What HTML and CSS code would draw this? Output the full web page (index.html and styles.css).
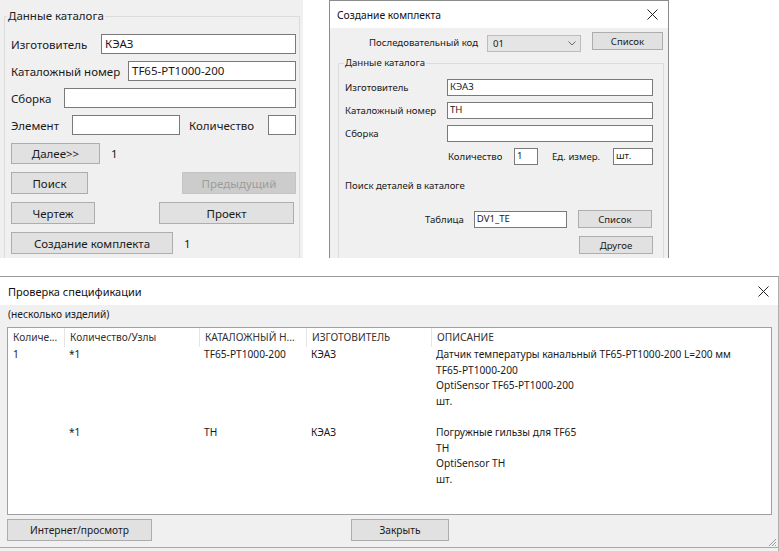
FILE: index.html
```html
<!DOCTYPE html>
<html lang="ru">
<head>
<meta charset="utf-8">
<title>Каталог</title>
<link rel="stylesheet" href="styles.css">
</head>
<body>
<div class="top">
  <section class="p1">
    <fieldset class="grp1">
      <legend>Данные каталога</legend>
      <div class="fields1">
        <div class="row1"><span>Изготовитель</span><div class="tb w195">КЭАЗ</div></div>
        <div class="row1"><span>Каталожный номер</span><div class="tb w168">TF65-PT1000-200</div></div>
        <div class="row1"><span>Сборка</span><div class="tb w232"></div></div>
        <div class="row1"><span class="lbl-el">Элемент</span><div class="tb w108"></div><span class="ml-qty">Количество</span><div class="tb w28 push"></div></div>
      </div>
      <div class="btns1">
        <div class="brow"><div class="btn w89 h21">Далее&gt;&gt;</div><span class="cnt">1</span></div>
        <div class="brow between"><div class="btn w77">Поиск</div><div class="btn w114 dis">Предыдущий</div></div>
        <div class="brow between"><div class="btn w84">Чертеж</div><div class="btn w135 mr3">Проект</div></div>
        <div class="brow"><div class="btn w162">Создание комплекта</div><span class="cnt">1</span></div>
      </div>
    </fieldset>
  </section>

  <section class="p2">
    <header class="tbar2"><span>Создание комплекта</span>
      <svg class="xicon" width="11" height="11" viewBox="0 0 11 11"><path d="M0.5 0.5 L10.5 10.5 M10.5 0.5 L0.5 10.5" stroke="#222" stroke-width="1" fill="none"/></svg>
    </header>
    <div class="body2">
      <div class="coderow">
        <span class="codelbl">Последовательный код</span>
        <div class="combo"><span>01</span>
          <svg width="8" height="5" viewBox="0 0 8 5"><path d="M0.5 0.5 L4 4 L7.5 0.5" stroke="#666" fill="none"/></svg>
        </div>
        <div class="btn b2 w71">Список</div>
      </div>
      <fieldset class="grp2">
        <legend>Данные каталога</legend>
        <div class="fields2">
          <div class="row2"><span>Изготовитель</span><div class="tb t2 w206">КЭАЗ</div></div>
          <div class="row2"><span>Каталожный номер</span><div class="tb t2 w206">TH</div></div>
          <div class="row2"><span>Сборка</span><div class="tb t2 w206"></div></div>
          <div class="row2 qtyrow"><span class="lbl-q">Количество</span><div class="tb t2 w24">1</div><span class="lbl-u">Ед. измер.</span><div class="tb t2 w40">шт.</div></div>
        </div>
        <div class="search">Поиск деталей в каталоге</div>
        <div class="tablerow"><span>Таблица</span><div class="tb t2 w93 ml10">DV1_TE</div><div class="btn b2 w74 ml11">Список</div></div>
        <div class="otherrow"><div class="btn b2 w74">Другое</div></div>
      </fieldset>
    </div>
  </section>
</div>

<section class="p3">
  <header class="tbar3"><span>Проверка спецификации</span>
    <svg class="xicon3" width="11" height="11" viewBox="0 0 11 11"><path d="M0.5 0.5 L10.5 10.5 M10.5 0.5 L0.5 10.5" stroke="#222" stroke-width="1" fill="none"/></svg>
  </header>
  <div class="body3">
    <div class="sub">(несколько изделий)</div>
    <div class="list">
      <div class="lhead">
        <div class="c">Количе...</div><div class="c">Количество/Узлы</div><div class="c">КАТАЛОЖНЫЙ Н...</div><div class="c">ИЗГОТОВИТЕЛЬ</div><div class="c">ОПИСАНИЕ</div>
      </div>
      <div class="lrow">
        <div class="c">1</div><div class="c">*1</div><div class="c">TF65-PT1000-200</div><div class="c">КЭАЗ</div>
        <div class="c desc"><div>Датчик температуры канальный TF65-PT1000-200 L=200 мм</div><div>TF65-PT1000-200</div><div>OptiSensor TF65-PT1000-200</div><div>шт.</div></div>
      </div>
      <div class="lrow">
        <div class="c"></div><div class="c">*1</div><div class="c">TH</div><div class="c">КЭАЗ</div>
        <div class="c desc"><div>Погружные гильзы для TF65</div><div>TH</div><div>OptiSensor TH</div><div>шт.</div></div>
      </div>
    </div>
    <div class="foot">
      <div class="btn b3 w145">Интернет/просмотр</div>
      <div class="btn b3 w98 ml199">Закрыть</div>
    </div>
  </div>
  <svg class="grip" width="10" height="10" viewBox="0 0 10 10"><path d="M9 2 L2 9 M9 5 L5 9 M9 8 L8 9" stroke="#9a9a9a" fill="none"/></svg>
</section>
</body>
</html>
```

FILE: styles.css
```css
* { box-sizing: border-box; }
body {
  margin: 0;
  width: 779px;
  height: 551px;
  overflow: hidden;
  background: #fff;
  font-family: "Noto Sans", "DejaVu Sans", sans-serif;
  color: #1a1a1a;
}

.top { display: flex; height: 258px; margin-bottom: 18px; }

/* ---------- panel 1 ---------- */
.p1 {
  width: 303px;
  height: 258px;
  background: #f0f0f0;
  overflow: hidden;
  padding: 8px 0 0 4px;
  font-size: 11.5px;
}
.grp1 {
  margin: 0;
  width: 296px;
  height: 280px;
  border: 1px solid #dcdcdc;
  padding: 0 3px 0 6px;
}
.grp1 legend { padding: 0 1px; margin-left: -4px; line-height: 16px; color: #222; }
.fields1 { display: flex; flex-direction: column; gap: 7px; padding-top: 10px; }
.row1 { display: flex; align-items: center; justify-content: space-between; height: 20px; white-space: nowrap; }
.row1 .lbl-el { width: 61px; flex: none; }
.row1 .ml-qty { margin-left: 9px; }
.row1 .push { margin-left: auto; }
.tb {
  height: 20px;
  background: #fff;
  border: 1px solid #7a7a7a;
  padding: 0 3px;
  line-height: 17px;
  white-space: nowrap;
  overflow: hidden;
}
.w195 { width: 195px; } .w168 { width: 168px; } .w232 { width: 232px; }
.w108 { width: 108px; } .w28 { width: 28px; }

.btns1 { display: flex; flex-direction: column; gap: 8px; margin-top: 7px; }
.brow { display: flex; align-items: center; height: 22px; }
.brow.between { justify-content: space-between; }
.btn {
  height: 22px;
  background: #e1e1e1;
  border: 1px solid #adadad;
  display: flex;
  align-items: center;
  justify-content: center;
  white-space: nowrap;
}
.btn.dis { background: #cccccc; border-color: #c4c4c4; color: #9c9c9c; }
.h21 { height: 21px; }
.w89 { width: 89px; } .w77 { width: 77px; } .w114 { width: 114px; }
.w84 { width: 84px; } .w135 { width: 135px; } .w162 { width: 162px; }
.mr3 { margin-right: 2px; }
.cnt { margin-left: 11px; }

/* ---------- panel 2 ---------- */
.p2 {
  margin-left: 26px;
  width: 340px;
  height: 258px;
  border: 1px solid #8c8c8c;
  border-bottom: none;
  background: #f0f0f0;
  overflow: hidden;
  font-size: 9.6px;
  white-space: nowrap;
}
.tbar2 {
  height: 27px;
  background: #fff;
  display: flex;
  align-items: center;
  justify-content: space-between;
  padding: 0 10px 0 7px;
  font-size: 10.3px;
  color: #111;
}
.xicon { display: block; }
.body2 { padding: 4px 5px 0 8px; }
.coderow { display: flex; align-items: flex-start; justify-content: flex-end; height: 22px; }
.codelbl { margin-top: 3px; line-height: 16px; }
.combo {
  margin: 3px 0 0 9px;
  width: 94px;
  height: 17px;
  background: #e5e5e5;
  border: 1px solid #bcbcbc;
  display: flex;
  align-items: center;
  justify-content: space-between;
  padding: 0 4px 0 5px;
}
.combo svg { display: block; }
.b2 { height: 18px; }
.coderow .b2 { margin-left: 11px; }
.w71 { width: 71px; } .w74 { width: 74px; }

.grp2 {
  margin: 1px 0 0 0;
  width: 326px;
  height: 240px;
  border: 1px solid #dcdcdc;
  padding: 0 0 0 6px;
}
.grp2 legend { padding: 0 1px; margin-left: -1px; line-height: 16px; }
.fields2 { display: flex; flex-direction: column; gap: 6px; padding-top: 8px; }
.row2 { display: flex; align-items: center; justify-content: space-between; height: 17px; width: 308px; }
.row2.qtyrow { justify-content: flex-start; padding-left: 103px; }
.lbl-q { width: 66px; flex: none; }
.lbl-u { width: 61px; flex: none; margin-left: 14px; }
.t2 { height: 17px; line-height: 14px; padding: 0 2px; }
.w206 { width: 206px; } .w24 { width: 24px; } .w40 { width: 40px; } .w93 { width: 93px; }
.ml10 { margin-left: 10px; } .ml11 { margin-left: 11px; }
.search { margin-top: 13px; line-height: 16px; }
.tablerow { display: flex; align-items: center; margin-top: 16px; padding-left: 80px; height: 18px; }
.otherrow { display: flex; padding-left: 234px; margin-top: 8px; }

/* ---------- panel 3 ---------- */
.p3 {
  position: relative;
  height: 275px;
  border-top: 1px solid #9a9a9a;
  border-right: 1px solid #b0b0b0;
  background: #f0f0f0;
  font-size: 10.2px;
}
.tbar3 {
  height: 28px;
  background: #fff;
  display: flex;
  align-items: center;
  justify-content: space-between;
  padding: 0 9px 0 8px;
  font-size: 11px;
  color: #111;
}
.xicon3 { display: block; }
.body3 { padding: 0 6px 0 7px; height: 243px; border-bottom: 1px solid #a8a8a8; }
.sub { line-height: 18px; padding-left: 1px; }
.list {
  margin-top: 4px;
  height: 188px;
  background: #fff;
  border: 1px solid #a0a0a0;
  color: #1a1a1a;
}
.lhead, .lrow { display: grid; grid-template-columns: 56px 135px 107px 125px 1fr; }
.lhead { height: 19px; align-items: center; color: #333; }
.lhead .c { border-left: 1px solid #e5e5e5; height: 19px; line-height: 19px; }
.lhead .c:first-child { border-left: none; }
.c { padding-left: 5px; white-space: nowrap; overflow: hidden; }
.lrow { line-height: 15.5px; height: 78px; }
.foot { display: flex; margin-top: 4px; }
.b3 { height: 22px; }
.w145 { width: 145px; } .w98 { width: 98px; }
.ml199 { margin-left: 199px; }
.grip { position: absolute; right: 1px; bottom: 4px; }
```
